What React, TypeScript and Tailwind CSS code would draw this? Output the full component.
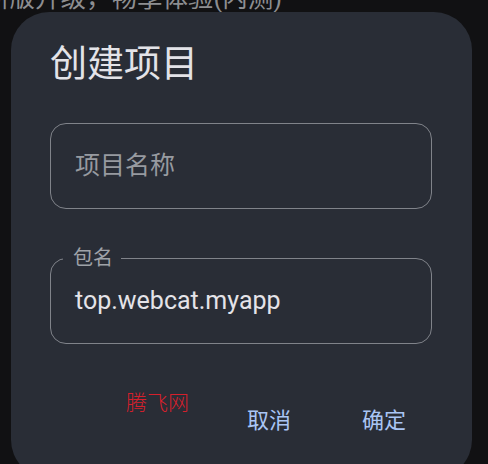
import { ReactNode } from "react"

const font = "font-['Roboto','Noto_Sans_CJK_SC',sans-serif]"

const OutlinedField = ({
  label,
  value,
  placeholder,
}: {
  label?: string
  value?: string
  placeholder?: string
}) => {
  return (
    <div className="relative flex h-[86px] w-[382px] items-center rounded-[16px] border border-[#80838a] pl-[24px]">
      {label && (
        <span className="absolute left-[12px] top-[-12px] bg-[#292d36] pl-[10px] pr-[8px] text-[20px] leading-[22px] text-[#9fa2a8]">
          {label}
        </span>
      )}
      {value ? (
        <span className="text-[25px] leading-[30px] text-[#e4e3e8]">{value}</span>
      ) : (
        <span className="text-[25px] leading-[30px] text-[#979aa0]">{placeholder}</span>
      )}
    </div>
  )
}

const TextButton = ({ children }: { children: ReactNode }) => (
  <button className="px-[27px] text-[22px] leading-[22px] text-[#a9c5f5]">{children}</button>
)

export default function App() {
  return (
    <div className={`${font} h-[464px] w-[488px] overflow-hidden bg-[#111113]`}>
      {/* page behind the modal */}
      <p className="-ml-[16px] -mt-[15px] whitespace-nowrap text-[25.5px] leading-[26px] text-[#8d8e91]">
        新版升级，畅享体验(内测)
      </p>

      {/* create project dialog */}
      <div className="relative ml-[11px] mt-[1px] h-[466px] w-[461px] rounded-[38px] bg-[#292d36] px-[39px] pt-[34px]">
        <h2 className="text-[37px] leading-[37px] text-[#e3e3e8]">创建项目</h2>

        <div className="mt-[40px]">
          <OutlinedField placeholder="项目名称" />
        </div>
        <div className="mt-[49px]">
          <OutlinedField label="包名" value="top.webcat.myapp" />
        </div>

        <div className="mt-[66px] flex justify-end gap-[17px]">
          <TextButton>取消</TextButton>
          <TextButton>确定</TextButton>
        </div>

        <span className="absolute left-[115px] top-[379px] text-[21px] font-light leading-[24px] text-[#d6202c]">
          腾飞网
        </span>
      </div>
    </div>
  )
}
